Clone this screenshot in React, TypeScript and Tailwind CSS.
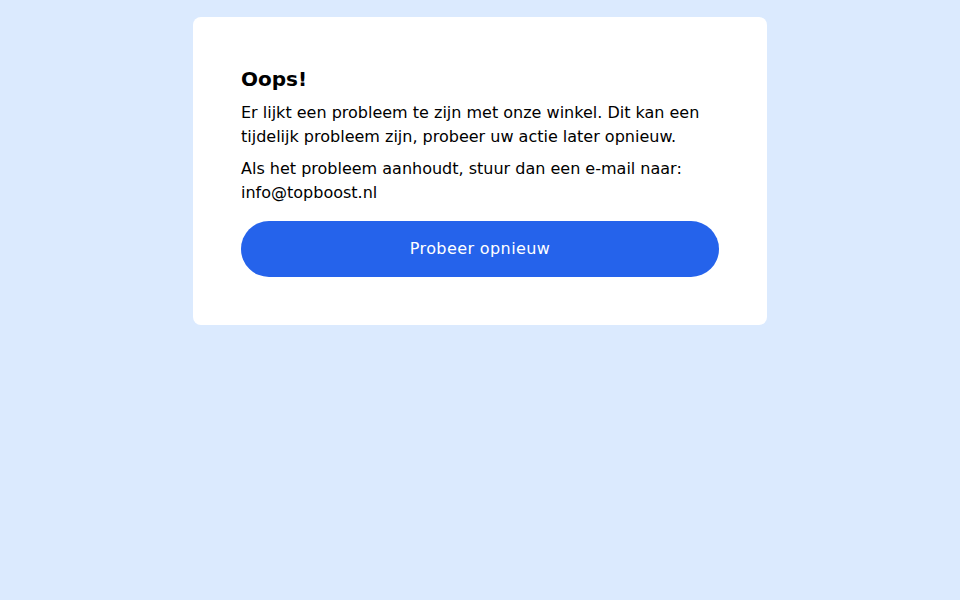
export default function App() {
  return (
    <div className="min-h-[600px] w-full bg-[#dbeafe] flex justify-center" style={{ fontFamily: '"DejaVu Sans", sans-serif' }}>
      <div className="mt-[17px] self-start w-[574px] rounded-lg bg-white p-12">
        <h1 className="text-xl font-bold text-black mb-2">Oops!</h1>
        <p className="text-base leading-6 text-black">Er lijkt een probleem te zijn met onze winkel. Dit kan een tijdelijk probleem zijn, probeer uw actie later opnieuw.</p>
        <p className="text-base leading-6 text-black mt-2">Als het probleem aanhoudt, stuur dan een e-mail naar: info@topboost.nl</p>
        <button className="mt-4 w-full h-14 rounded-full bg-[#2563eb] text-white text-base tracking-wide">Probeer opnieuw</button>
      </div>
    </div>
  );
}
